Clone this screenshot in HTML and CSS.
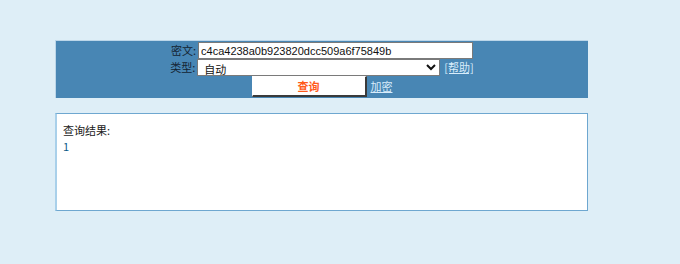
FILE: index.html
```html
<!DOCTYPE html>
<html>
<head>
<meta charset="utf-8">
<link rel="stylesheet" href="styles.css">
</head>
<body>
<div class="page">
  <form class="panel">
    <div class="row">
      <label class="lbl">密文:</label>
      <input class="txt" type="text" value="c4ca4238a0b923820dcc509a6f75849b">
    </div>
    <div class="row">
      <label class="lbl">类型:</label>
      <select class="sel"><option>自动</option></select>
      <a class="lnk" href="#">[帮助]</a>
    </div>
    <div class="row">
      <button class="btn" type="button">查询</button>
      <a class="lnk" href="#">加密</a>
    </div>
  </form>
  <div class="result">
    <div class="rtitle">查询结果:</div>
    <div class="rval">1</div>
  </div>
</div>
</body>
</html>
```

FILE: styles.css
```css
html, body {
  margin: 0;
  padding: 0;
  background: #deeef7;
}
body {
  font-family: "Noto Sans CJK SC", "Liberation Sans", sans-serif;
  font-size: 11px;
  color: #1a1a1a;
}
.page {
  width: 533px;
  margin: 40px 0 0 55px;
}
.panel {
  margin: 0;
  background: #4886b4;
  border-top: 1px solid #bcd6e9;
  border-left: 1px solid #bcd6e9;
  padding: 1px 0 1px;
  display: flex;
  flex-direction: column;
  align-items: center;
}
.row {
  display: flex;
  align-items: center;
  justify-content: center;
}
.lbl {
  line-height: 17px;
  color: #142433;
  margin-right: 2px;
}
.txt {
  box-sizing: border-box;
  width: 275px;
  height: 17px;
  margin: 0;
  padding: 0 2px;
  border: 1px solid #7a7a7a;
  background: #fff;
  font-family: "Liberation Sans", sans-serif;
  font-size: 11px;
  color: #111;
}
.sel {
  box-sizing: border-box;
  width: 243px;
  height: 17px;
  margin: 0 4px 0 0;
  padding: 0 0 0 2px;
  border: 1px solid #7a7a7a;
  border-radius: 0;
  background: #fff;
  font-family: "Noto Sans CJK SC", sans-serif;
  font-size: 11px;
  color: #111;
}
.lnk {
  color: #d8ecfb;
  text-decoration: underline;
  line-height: 17px;
}
.btn {
  box-sizing: border-box;
  width: 115px;
  height: 21px;
  margin: 0 4px 0 0;
  padding: 0;
  background: #fff;
  border: 1px solid #fff;
  border-right: 2px solid #3a3a3a;
  border-bottom: 2px solid #3a3a3a;
  font-family: "Noto Sans CJK SC", sans-serif;
  font-size: 11px;
  font-weight: bold;
  color: #ff5a1a;
}
.result {
  box-sizing: border-box;
  margin-top: 15px;
  height: 98px;
  background: #fff;
  border: 1px solid #6ea7d0;
  border-left: 2px solid #a9d0ea;
  padding: 8px 0 0 6px;
  line-height: 16px;
}
.rval {
  color: #0d5a88;
}
```
